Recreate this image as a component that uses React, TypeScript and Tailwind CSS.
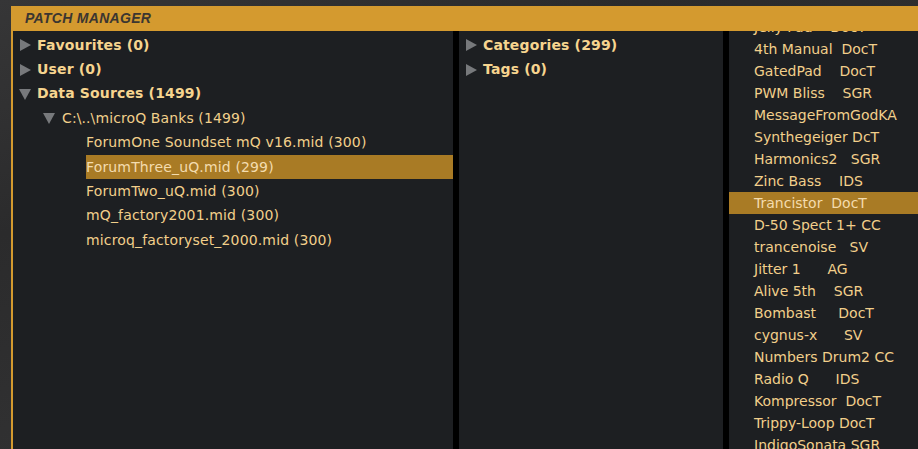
const files = [
  "ForumOne Soundset mQ v16.mid (300)",
  "ForumThree_uQ.mid (299)",
  "ForumTwo_uQ.mid (300)",
  "mQ_factory2001.mid (300)",
  "microq_factoryset_2000.mid (300)",
];

const patches = [
  "Jelly Pad    DocT",
  "4th Manual  DocT",
  "GatedPad    DocT",
  "PWM Bliss    SGR",
  "MessageFromGodKA",
  "Synthegeiger DcT",
  "Harmonics2   SGR",
  "Zinc Bass    IDS",
  "Trancistor  DocT",
  "D-50 Spect 1+ CC",
  "trancenoise   SV",
  "Jitter 1      AG",
  "Alive 5th    SGR",
  "Bombast     DocT",
  "cygnus-x      SV",
  "Numbers Drum2 CC",
  "Radio Q      IDS",
  "Kompressor  DocT",
  "Trippy-Loop DocT",
  "IndigoSonata SGR",
];

const Arrow = ({ open }: { open?: boolean }) =>
  open ? (
    <svg width="12" height="12" viewBox="0 0 12 12" className="shrink-0">
      <polygon points="0,1 12,1 6,12" fill="#77797c" />
    </svg>
  ) : (
    <svg width="12" height="12" viewBox="0 0 12 12" className="shrink-0">
      <polygon points="1,0 12,6 1,12" fill="#77797c" />
    </svg>
  );

const Node = ({ label, open }: { label: string; open?: boolean }) => (
  <div className="flex h-[24.4px] items-center gap-[6px] pl-[6px]">
    <Arrow open={open} />
    <span className="font-bold tracking-[0.15px] text-[#f6d48f]">{label}</span>
  </div>
);

export default function App() {
  return (
    <div className="h-[449px] w-[918px] overflow-hidden bg-[#2e2e2f] bg-[linear-gradient(160deg,#363637_0%,#2b2b2c_30%,#313132_60%,#272728_100%)] pl-[11px] pt-[6px] font-['DejaVu_Sans',sans-serif] text-[14px] text-[#f2cf8b]">
      <div className="flex h-full flex-col border-l-2 border-[#d49a2f] bg-[#1d1f22]">
        <div className="flex h-[25px] shrink-0 items-center bg-[#d49a2f] pl-3 font-['Liberation_Sans',sans-serif] text-[14px] font-bold italic tracking-[0.3px] text-[#3b3631]">
          PATCH MANAGER
        </div>
        <div className="flex min-h-0 flex-1">
          <div className="w-[440px] shrink-0 pt-[2px]">
            <Node label="Favourites (0)" />
            <Node label="User (0)" />
            <Node label="Data Sources (1499)" open />
            <div className="flex h-[24.4px] items-center gap-[7px] pl-[30px]">
              <Arrow open />
              <span className="tracking-[0.1px]">C:\..\microQ Banks (1499)</span>
            </div>
            {files.map((f, i) => (
              <div key={f} className="flex h-[24.4px] items-center pl-[73px]">
                <span
                  className={
                    i === 1
                      ? "flex h-full flex-1 items-center bg-[#a97b25] tracking-[0.15px] text-[#f4dcae]"
                      : "flex h-full flex-1 items-center tracking-[0.15px]"
                  }
                >
                  {f}
                </span>
              </div>
            ))}
          </div>
          <div className="w-[6px] shrink-0 bg-black" />
          <div className="w-[264px] shrink-0 pt-[2px]">
            <Node label="Categories (299)" />
            <Node label="Tags (0)" />
          </div>
          <div className="w-[6px] shrink-0 bg-black" />
          <div className="min-w-0 flex-1 overflow-hidden">
            <div className="-mt-[15px]">
              {patches.map((p, i) => (
                <div
                  key={p}
                  className={
                    i === 8
                      ? "flex h-[22px] items-center whitespace-pre bg-[#a97b25] pl-[25px] text-[#f4dcae]"
                      : "flex h-[22px] items-center whitespace-pre pl-[25px]"
                  }
                >
                  {p}
                </div>
              ))}
            </div>
          </div>
        </div>
      </div>
    </div>
  );
}
